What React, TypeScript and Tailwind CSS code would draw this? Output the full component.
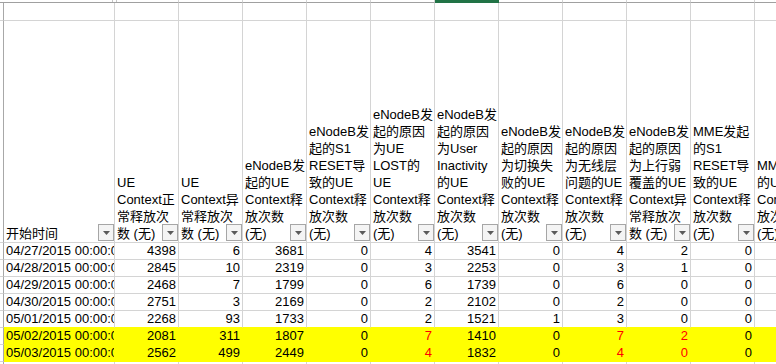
import React from 'react'

// header text, one entry per wrapped line (Excel wraps at the column width)
const headers: string[][] = [
  ['开始时间'],
  ['UE', 'Context正', '常释放次', '数 (无)'],
  ['UE', 'Context异', '常释放次', '数 (无)'],
  ['eNodeB发', '起的UE', 'Context释', '放次数', '(无)'],
  ['eNodeB发', '起的S1', 'RESET导', '致的UE', 'Context释', '放次数', '(无)'],
  ['eNodeB发', '起的原因', '为UE', 'LOST的', 'UE', 'Context释', '放次数', '(无)'],
  ['eNodeB发', '起的原因', '为User', 'Inactivity', '的UE', 'Context释', '放次数', '(无)'],
  ['eNodeB发', '起的原因', '为切换失', '败的UE', 'Context释', '放次数', '(无)'],
  ['eNodeB发', '起的原因', '为无线层', '问题的UE', 'Context释', '放次数', '(无)'],
  ['eNodeB发', '起的原因', '为上行弱', '覆盖的UE', 'Context异', '常释放次', '数 (无)'],
  ['MME发起', '的S1', 'RESET导', '致的UE', 'Context释', '放次数', '(无)'],
  ['MME发起', '的UE', 'Context释', '放次数', '(无)'],
]

interface Row {
  date: string
  vals: string[]
  red?: number[]
  hl?: boolean
}

const rows: Row[] = [
  { date: '04/27/2015 00:00:00', vals: ['4398', '6', '3681', '0', '4', '3541', '0', '4', '2', '0'] },
  { date: '04/28/2015 00:00:00', vals: ['2845', '10', '2319', '0', '3', '2253', '0', '3', '1', '0'] },
  { date: '04/29/2015 00:00:00', vals: ['2468', '7', '1799', '0', '6', '1739', '0', '6', '0', '0'] },
  { date: '04/30/2015 00:00:00', vals: ['2751', '3', '2169', '0', '2', '2102', '0', '2', '0', '0'] },
  { date: '05/01/2015 00:00:00', vals: ['2268', '93', '1733', '0', '2', '1521', '1', '3', '0', '0'] },
  { date: '05/02/2015 00:00:00', vals: ['2081', '311', '1807', '0', '7', '1410', '0', '7', '2', '0'], red: [4, 7, 8], hl: true },
  { date: '05/03/2015 00:00:00', vals: ['2562', '499', '2449', '0', '4', '1832', '0', '4', '0', '0'], red: [4, 7, 8], hl: true },
]

const colW = (i: number) => (i === 0 ? 'w-[111px]' : 'w-[64px]')

function RowHead({ h, yellowBottom }: { h: string; yellowBottom?: boolean }) {
  return (
    <div
      className={`${h} w-[4px] shrink-0 border-r border-b border-r-[#a8a8a8] ${
        yellowBottom ? 'border-b-[#d4d4d4]' : 'border-b-[#d4d4d4]'
      }`}
    />
  )
}

function FilterButton() {
  return (
    <div className="absolute right-0 bottom-[1px] flex h-[17px] w-[16px] items-center justify-center border border-[#a6a6a6] bg-[#f4f4f4]">
      <svg width="7" height="4" viewBox="0 0 7 4">
        <path d="M0 0h7L3.5 4z" fill="#5a5a5a" />
      </svg>
    </div>
  )
}

export default function App() {
  return (
    <div className="h-[364px] w-[776px] overflow-hidden bg-white font-['Liberation_Sans','Noto_Sans_CJK_SC',sans-serif] text-[13px] text-black">
      <div className="flex w-max flex-col">
        {/* bottom edge of the column headings */}
        <div className="flex h-[3px]">
          <div className="w-[4px] shrink-0 border-b border-[#a0a0a0]" />
          <div className="flex w-[111px] shrink-0 justify-end border-b border-[#a0a0a0] pr-[2px]">
            <div className="h-full w-[1px] bg-[#c6c6c6]" />
          </div>
          {headers.slice(1).map((_, i) =>
            i === 5 ? (
              <div key={i} className="w-[64px] shrink-0 bg-[#217346]" />
            ) : (
              <div
                key={i}
                className={`flex w-[64px] shrink-0 border-r border-b border-r-[#d4d4d4] border-b-[#a0a0a0] ${
                  i === 0 ? 'pl-[1px]' : ''
                }`}
              >
                {i === 0 && <div className="h-full w-[1px] bg-[#c6c6c6]" />}
              </div>
            ),
          )}
        </div>

        {/* row 1, empty */}
        <div className="flex h-[18px]">
          <RowHead h="h-full" />
          {headers.map((_, i) => (
            <div key={i} className={`${colW(i)} h-full shrink-0 border-r border-b border-[#d4d4d4]`} />
          ))}
        </div>

        {/* header row */}
        <div className="flex h-[222px]">
          <RowHead h="h-full" />
          {headers.map((lines, i) => (
            <div
              key={i}
              className={`${colW(i)} relative flex h-full shrink-0 flex-col justify-end border-r border-b border-[#d4d4d4] pl-[2px] leading-[17px]`}
            >
              {lines.map((l) => (
                <div key={l} className="whitespace-nowrap">
                  {l}
                </div>
              ))}
              <FilterButton />
            </div>
          ))}
        </div>

        {/* data rows */}
        {rows.map((r, ri) => {
          const nextHl = rows[ri + 1]?.hl
          const edge = r.hl || nextHl ? 'border-b-[#ffff00]' : 'border-b-[#d4d4d4]'
          const side = r.hl ? 'border-r-[#ffff00] bg-[#ffff00]' : 'border-r-[#d4d4d4]'
          return (
            <div key={r.date} className="flex h-[17px] leading-[16px]">
              <RowHead h="h-full" />
              <div className={`w-[111px] h-full shrink-0 overflow-hidden whitespace-nowrap border-r border-b pl-[2px] ${edge} ${side}`}>
                {r.date}
              </div>
              {r.vals.map((v, ci) => (
                <div
                  key={ci}
                  className={`w-[64px] h-full shrink-0 border-r border-b pr-[2px] text-right ${edge} ${side} ${
                    r.red?.includes(ci) ? 'text-[#ff0000]' : ''
                  }`}
                >
                  {v}
                </div>
              ))}
              <div className={`w-[64px] h-full shrink-0 border-r border-b ${edge} ${side}`} />
            </div>
          )
        })}

        {/* row 9, empty */}
        <div className="flex h-[17px]">
          <RowHead h="h-full" />
          {headers.map((_, i) => (
            <div key={i} className={`${colW(i)} h-full shrink-0 border-r border-b border-[#d4d4d4]`} />
          ))}
        </div>
      </div>
    </div>
  )
}
